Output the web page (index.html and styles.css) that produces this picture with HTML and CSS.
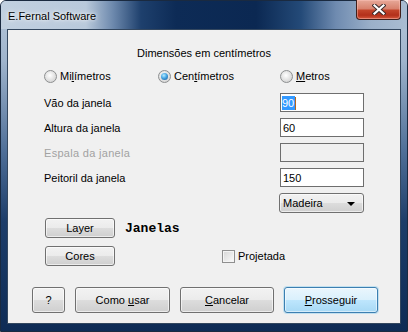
FILE: index.html
```html
<!DOCTYPE html>
<html lang="pt">
<head>
    <meta charset="UTF-8">
    <title>E.Fernal Software</title>
    <link rel="stylesheet" href="styles.css">
</head>
<body>
    <div class="window">
        <div class="titlebar">
            <span class="title">E.Fernal Software</span>
            <div class="close">
                <svg width="14" height="11" viewBox="0 0 14 11">
                    <path d="M2.5 1.5 L11.5 9.5 M11.5 1.5 L2.5 9.5" stroke="#3b2b2b" stroke-width="4.2" stroke-linecap="square"/>
                    <path d="M2.5 1.5 L11.5 9.5 M11.5 1.5 L2.5 9.5" stroke="#ffffff" stroke-width="2.2" stroke-linecap="square"/>
                </svg>
            </div>
        </div>

        <div class="client">
            <div class="heading">Dimensões em centímetros</div>

            <div class="form">
                <div class="units">
                    <label class="option"><span class="radio"></span><span>Mi<u>l</u>ímetros</span></label>
                    <label class="option"><span class="radio checked"></span><span>Cen<u>t</u>ímetros</span></label>
                    <label class="option"><span class="radio"></span><span><u>M</u>etros</span></label>
                </div>

                <div class="fields">
                    <span class="label">Vão da janela</span>
                    <div class="textbox"><span class="selected">90</span><span class="caret"></span></div>

                    <span class="label">Altura da janela</span>
                    <div class="textbox">60</div>

                    <span class="label disabled">Espala da janela</span>
                    <div class="textbox empty"></div>

                    <span class="label">Peitoril da janela</span>
                    <div class="textbox">150</div>

                    <span class="label"></span>
                    <div class="combo">
                        <span>Madeira</span>
                        <span class="arrow"></span>
                    </div>
                </div>

                <div class="tool-row first">
                    <div class="btn small"><span>Layer</span></div>
                    <span class="layer-name">Janelas</span>
                </div>
                <div class="tool-row">
                    <div class="btn small"><span>Cores</span></div>
                    <label class="check"><span class="checkbox"></span><span>Projetada</span></label>
                </div>
            </div>

            <div class="actions">
                <div class="btn help"><span>?</span></div>
                <div class="btn wide usage"><span>Como <u>u</u>sar</span></div>
                <div class="btn wide"><span><u>C</u>ancelar</span></div>
                <div class="btn wide default"><span><u>P</u>rosseguir</span></div>
            </div>
        </div>
    </div>
</body>
</html>
```

FILE: styles.css
```css
body {
    margin: 0;
    width: 408px;
    height: 332px;
    overflow: hidden;
    font-family: "Liberation Sans", Arial, sans-serif;
    font-size: 11px;
    color: #000;
}

.window {
    box-sizing: border-box;
    width: 408px;
    height: 332px;
    border: 1px solid #1a2a40;
    border-radius: 6px 6px 0 0;
    padding: 0 6px 7px 6px;
    display: flex;
    flex-direction: column;
    background: linear-gradient(180deg, #b6c7da 0, #9fb4cc 60px, #4f6f98 150px, #1d3d69 220px, #0e2b55 332px);
}

.titlebar {
    height: 28px;
    margin: 0 -6px;
    display: flex;
    align-items: flex-start;
    border-radius: 5px 5px 0 0;
    background: linear-gradient(90deg, #c1d0e0 0, #b9c9db 85px, #6d89ad 112px, #1e406d 140px, #0d2b56 175px, #0b2852 255px, #244a78 300px, #6f8bb0 335px, #9bb0c9 370px, #aabdd3 408px);
}

.title {
    padding: 8px 0 0 7px;
    line-height: 14px;
    text-shadow: 0 0 6px rgba(255, 255, 255, 0.9), 0 0 3px rgba(255, 255, 255, 0.9);
}

.close {
    margin: -1px 6px 0 auto;
    width: 45px;
    height: 20px;
    box-sizing: border-box;
    border: 1px solid #40201c;
    border-top: none;
    border-radius: 0 0 4px 4px;
    display: flex;
    align-items: center;
    justify-content: center;
    background: linear-gradient(180deg, #e7a999 0, #d8826e 45%, #c2442a 55%, #b3301a 80%, #d5583c 100%);
    box-shadow: inset 0 0 0 1px rgba(255, 200, 190, 0.45);
}

.client {
    flex: 1;
    border: 1px solid #33475f;
    background: #f0f0f0;
    padding-top: 16px;
}

.heading {
    text-align: center;
    line-height: 14px;
}

.form {
    padding-left: 36px;
}

.units {
    margin-top: 9px;
    display: grid;
    grid-template-columns: 114px 122px auto;
    line-height: 14px;
}

.option {
    display: flex;
    align-items: center;
}

.radio {
    position: relative;
    width: 13px;
    height: 13px;
    box-sizing: border-box;
    margin-right: 3px;
    border: 1px solid #8d8f90;
    border-radius: 50%;
    background: radial-gradient(circle at 45% 40%, #ffffff 0, #e6e6e6 45%, #c9c9c9 100%);
}

.radio.checked::after {
    content: "";
    position: absolute;
    left: 2px;
    top: 2px;
    width: 7px;
    height: 7px;
    border-radius: 50%;
    background: radial-gradient(circle at 40% 35%, #b9ecff 0, #46a6e4 45%, #15508f 100%);
}

.fields {
    margin-top: 10px;
    display: grid;
    grid-template-columns: 236px 84px;
    grid-auto-rows: 19px;
    row-gap: 6px;
    align-items: center;
}

.label {
    line-height: 14px;
}

.label.disabled {
    color: #a2a2a2;
    letter-spacing: 0.3px;
}

.textbox {
    box-sizing: border-box;
    height: 19px;
    border: 1px solid #6e6e6e;
    background: #fff;
    padding: 1px 0 0 2px;
    line-height: 15px;
    display: flex;
    align-items: center;
}

.textbox.empty {
    background: #f0f0f0;
}

.selected {
    background: #3399ff;
    color: #fff;
    padding: 0 1px 0 0;
    margin-left: -1px;
    line-height: 14px;
}

.caret {
    width: 1px;
    height: 13px;
    background: #b5651d;
}

.combo {
    box-sizing: border-box;
    height: 20px;
    width: 85px;
    margin-left: -1px;
    align-self: start;
    border: 1px solid #707070;
    border-radius: 3px;
    padding: 0 8px 0 3px;
    display: flex;
    align-items: center;
    justify-content: space-between;
    background: linear-gradient(180deg, #f2f2f2 0, #ebebeb 50%, #dddddd 50%, #cfcfcf 100%);
    box-shadow: inset 0 0 0 1px rgba(255, 255, 255, 0.6);
}

.arrow {
    width: 0;
    height: 0;
    border-left: 4px solid transparent;
    border-right: 4px solid transparent;
    border-top: 4px solid #000;
    margin-top: 1px;
}

.tool-row {
    margin-top: 8px;
    display: flex;
    align-items: center;
}

.tool-row.first {
    margin-top: 6px;
}

.btn {
    box-sizing: border-box;
    border: 1px solid #707070;
    border-radius: 3px;
    display: flex;
    align-items: center;
    justify-content: center;
    background: linear-gradient(180deg, #f2f2f2 0, #ebebeb 50%, #dddddd 50%, #cfcfcf 100%);
    box-shadow: inset 0 0 0 1px rgba(255, 255, 255, 0.6);
}

.btn.small {
    width: 70px;
    height: 20px;
    margin-left: 1px;
}

.layer-name {
    margin-left: 10px;
    font-family: "Liberation Mono", "Courier New", monospace;
    font-weight: bold;
    font-size: 13px;
}

.check {
    margin-left: 107px;
    display: flex;
    align-items: center;
}

.checkbox {
    width: 13px;
    height: 13px;
    box-sizing: border-box;
    margin-right: 3px;
    border: 1px solid #8f8f8f;
    background: linear-gradient(135deg, #d6d6d6 0, #ececec 60%, #fbfbfb 100%);
    box-shadow: inset 0 0 0 1px #f4f4f4;
}

.actions {
    margin-top: 21px;
    padding-left: 24px;
    display: flex;
    gap: 10px;
}

.btn.help {
    width: 33px;
    height: 26px;
}

.btn.wide {
    width: 94px;
    height: 26px;
}

.btn.usage {
    width: 95px;
}

.btn.default {
    border-color: #3c7fb1;
    background: linear-gradient(180deg, #eaf6fd 0, #d9f0fc 50%, #bee6fd 50%, #a7d9f5 100%);
    box-shadow: inset 0 0 0 1px rgba(255, 255, 255, 0.5), 0 0 0 1px rgba(108, 196, 238, 0.35);
}
```
